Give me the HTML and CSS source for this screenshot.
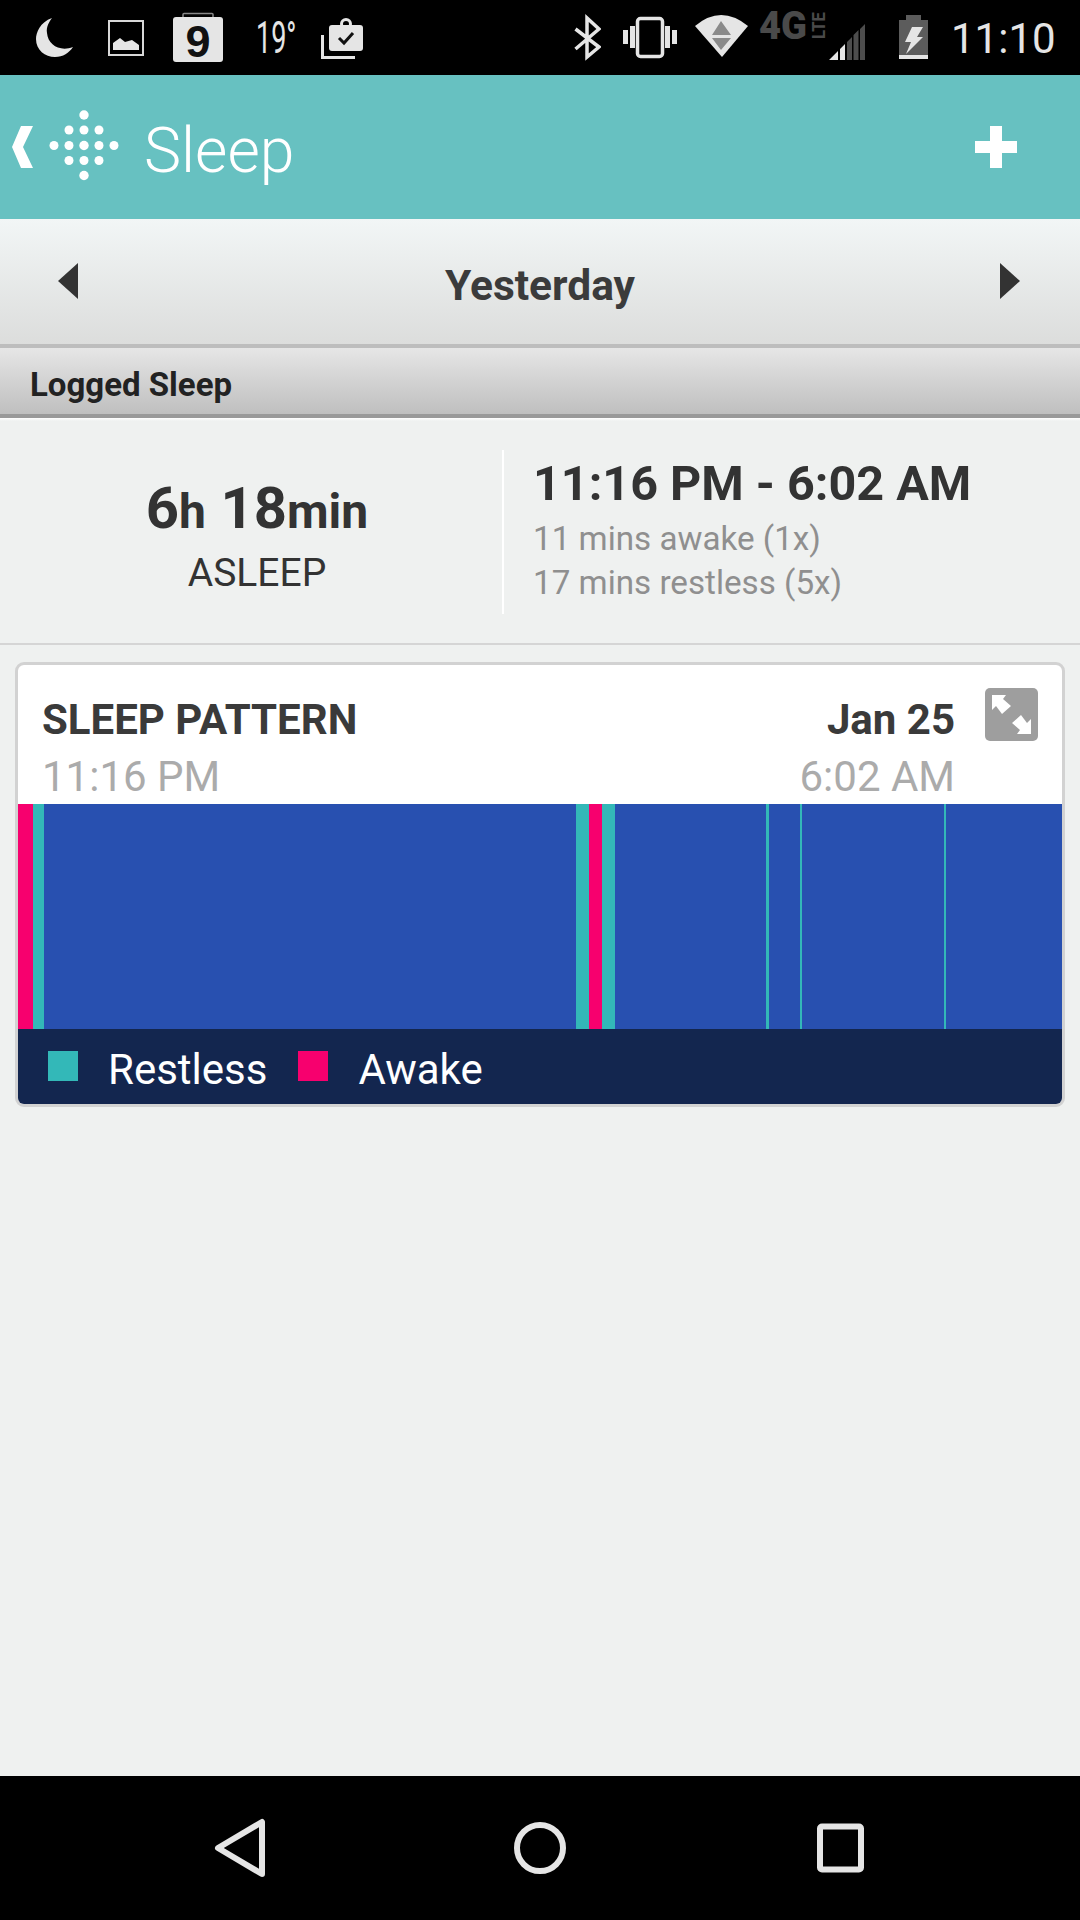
FILE: index.html
```html
<!DOCTYPE html>
<html lang="en">
<head>
    <meta charset="UTF-8">
    <title>Sleep</title>
    <link rel="stylesheet" href="styles.css">
</head>
<body>
    <!-- status bar: every icon is 75 tall so its y values are the y of the screen -->
    <div class="status">
        <svg class="moon" width="37" height="75" viewBox="36 0 37 75"><path d="M52 18C40 22 36 33 36 39C36 50 45 57 55 57C63 57 69 53 73 47C60 52 48 45 47 33C46 27 49 22 52 18Z" fill="#e5e5e5"/></svg>
        <svg class="picture" width="36" height="75" viewBox="108 0 36 75"><rect x="109" y="21" width="34" height="34" fill="none" stroke="#d8d8d8" stroke-width="2"/><path d="M113 50V43L120 38L125 42L132 40L139 45V50Z" fill="#e5e5e5"/></svg>
        <svg class="calendar" width="50" height="75" viewBox="173 0 50 75"><rect x="183" y="13.500" width="30" height="6" rx="1" fill="none" stroke="#888" stroke-width="1.500"/><rect x="173" y="17" width="50" height="45" rx="3" fill="#e5e5e5"/><text x="198" y="57" class="calendar-day">9</text></svg>
        <span class="temp">19°</span>
        <svg class="case" width="42" height="75" viewBox="321 0 42 75"><path d="M322.500 35V57.500H355" fill="none" stroke="#e5e5e5" stroke-width="3"/><circle cx="346" cy="24" r="4.500" fill="none" stroke="#e5e5e5" stroke-width="3"/><rect x="329" y="25" width="34" height="26" rx="3" fill="#e5e5e5"/><path d="M339 38L344 43L353 33" fill="none" stroke="#111" stroke-width="3"/></svg>

        <svg class="bluetooth" width="27" height="75" viewBox="574 0 27 75"><path d="M575.500 29L599 47L587 57V18L599 29L575.500 49" fill="none" stroke="#e5e5e5" stroke-width="3.500"/></svg>
        <svg class="vibrate" width="54" height="75" viewBox="623 0 54 75"><rect x="637.500" y="18.500" width="25" height="38" rx="3" fill="none" stroke="#e5e5e5" stroke-width="3.500"/><path d="M623 30h5v14h-5zM630 26h5v22h-5zM665 26h5v22h-5zM672 30h5v14h-5z" fill="#e5e5e5"/></svg>
        <svg class="wifi" width="53" height="75" viewBox="695 0 53 75"><path d="M695 26Q721 4 748 26L722 57Z" fill="#e5e5e5"/><path d="M721 21L731 35H712ZM712 38H731L721 50Z" fill="#8a8a8a"/></svg>
        <svg class="network" width="66" height="75" viewBox="759 0 66 75"><text x="759" y="39" class="net-big" textLength="48" lengthAdjust="spacingAndGlyphs">4G</text><text transform="translate(825 39) rotate(-90)" class="net-small" textLength="27" lengthAdjust="spacingAndGlyphs">LTE</text></svg>
        <svg class="signal" width="36" height="75" viewBox="829 0 36 75"><path d="M829 60L838 51V60ZM840 49L845 44V60H840Z" fill="#e5e5e5"/><path d="M847 42L852 37V60H847ZM853.500 35L858.500 30V60H853.500ZM860 29L865 24V60H860Z" fill="#4d4d4d"/></svg>
        <svg class="battery" width="29" height="75" viewBox="899 0 29 75"><path d="M906 15H921V20H928V59H899V20H906Z" fill="#5c5c5c"/><rect x="899" y="55" width="29" height="4" fill="#e5e5e5"/><path d="M912 27H923L917 37H923L906 54L911 42H905Z" fill="#e5e5e5"/></svg>
        <span class="clock">11:10</span>
    </div>

    <header class="appbar">
        <svg class="back" width="21" height="42" viewBox="12 126 21 42"><path d="M21 126H33L23 147L33 168H21L12 147Z" fill="#fff"/></svg>
        <svg class="logo" width="70" height="74" viewBox="49 110 70 74" fill="#fff">
            <circle cx="84" cy="115" r="4.700"/>
            <circle cx="69" cy="130" r="4.500"/><circle cx="84" cy="130" r="4.500"/><circle cx="99" cy="130" r="4.500"/>
            <circle cx="54" cy="145.500" r="4.500"/><circle cx="69" cy="145.500" r="4.500"/><circle cx="84" cy="145.500" r="4.700"/><circle cx="99" cy="145.500" r="4.500"/><circle cx="114" cy="145.500" r="4.500"/>
            <circle cx="69" cy="160.500" r="4.500"/><circle cx="84" cy="160.500" r="4.500"/><circle cx="99" cy="160.500" r="4.500"/>
            <circle cx="84" cy="175.500" r="4.700"/>
        </svg>
        <h1 class="appbar-title">Sleep</h1>
        <svg class="plus" width="42" height="42" viewBox="0 0 42 42"><path d="M15 0H27V15H42V27H27V42H15V27H0V15H15Z" fill="#fff"/></svg>
    </header>

    <div class="daybar">
        <svg class="day-arrow" width="20" height="36" viewBox="0 0 20 36"><path d="M20 0V36L0 18Z" fill="#333"/></svg>
        <span class="daybar-label">Yesterday</span>
        <svg class="day-arrow" width="20" height="36" viewBox="0 0 20 36"><path d="M0 0V36L20 18Z" fill="#333"/></svg>
    </div>

    <div class="section-title">Logged Sleep</div>

    <main class="content">
        <section class="summary">
            <div class="summary-total">
                <div class="total-value">6<small>h</small> 18<small>min</small></div>
                <div class="total-label">ASLEEP</div>
            </div>
            <div class="summary-times">
                <div class="times-range">11:16 PM - 6:02 AM</div>
                <div class="times-note">11 mins awake (1x)</div>
                <div class="times-note">17 mins restless (5x)</div>
            </div>
        </section>

        <section class="card">
            <div class="card-head">
                <div class="card-col">
                    <div class="card-strong">SLEEP PATTERN</div>
                    <div class="card-time">11:16 PM</div>
                </div>
                <div class="card-col card-right">
                    <div class="card-strong">Jan 25</div>
                    <div class="card-time">6:02 AM</div>
                </div>
                <svg class="expand" width="53" height="53" viewBox="0 0 53 53">
                    <rect width="53" height="53" rx="5" fill="#9e9e9e"/>
                    <path d="M7 7H21L18 11L26 18L17 26L11 18L7 22ZM46 46H32L35 42L27 35L36 27L42 35L46 31Z" fill="#fff"/>
                </svg>
            </div>
            <div class="chart">
                <span class="seg awake" style="width:15px"></span>
                <span class="seg restless" style="width:11px"></span>
                <span class="seg" style="width:532px"></span>
                <span class="seg restless" style="width:13px"></span>
                <span class="seg awake" style="width:13px"></span>
                <span class="seg restless" style="width:13px"></span>
                <span class="seg" style="width:151px"></span>
                <span class="seg restless" style="width:3px"></span>
                <span class="seg" style="width:31px"></span>
                <span class="seg restless" style="width:2px"></span>
                <span class="seg" style="width:142px"></span>
                <span class="seg restless" style="width:2px"></span>
            </div>
            <div class="legend">
                <span class="swatch restless"></span>
                <span class="legend-text">Restless</span>
                <span class="swatch awake"></span>
                <span class="legend-text">Awake</span>
            </div>
        </section>
    </main>

    <nav class="navbar">
        <svg width="52" height="60" viewBox="0 0 52 60"><path d="M48 4V56L4 30Z" fill="none" stroke="#e5e5e5" stroke-width="6" stroke-linejoin="round"/></svg>
        <svg width="52" height="60" viewBox="0 0 52 60"><circle cx="26" cy="30" r="23" fill="none" stroke="#e5e5e5" stroke-width="6"/></svg>
        <svg width="52" height="60" viewBox="0 0 52 60"><rect x="6" y="8.500" width="41" height="43" rx="2" fill="none" stroke="#e5e5e5" stroke-width="6"/></svg>
    </nav>
</body>
</html>
```

FILE: styles.css
```css
* {
    box-sizing: border-box;
}

body {
    margin: 0;
    width: 1080px;
    height: 1920px;
    display: flex;
    flex-direction: column;
    overflow: hidden;
    background: #eff1f0;
    font-family: Roboto, "Liberation Sans", sans-serif;
}

svg {
    display: block;
    flex-shrink: 0;
}

/* status bar */
.status {
    height: 75px;
    flex-shrink: 0;
    display: flex;
    padding: 0 25px 0 36px;
    background: #000;
    color: #e5e5e5;
}

.picture { margin-left: 35px; }
.calendar { margin-left: 29px; }
.case { margin-left: 28px; }
.bluetooth { margin-left: auto; }
.vibrate { margin-left: 22px; }
.wifi { margin-left: 18px; }
.network { margin-left: 11px; overflow: visible; }
.signal { margin-left: 4px; }
.battery { margin-left: 34px; }

.calendar-day {
    font-family: "Liberation Sans", sans-serif;
    font-size: 45px;
    font-weight: 700;
    text-anchor: middle;
    fill: #111;
}

.net-big {
    font-size: 38px;
    font-weight: 900;
    fill: #4a4a4a;
}

.net-small {
    font-size: 19px;
    font-weight: 700;
    fill: #4a4a4a;
}

.temp {
    width: 37px;
    margin-left: 33px;
    font-size: 45px;
    line-height: 76px;
    white-space: nowrap;
    transform: scaleX(.6);
    transform-origin: left center;
}

.clock {
    width: 104px;
    margin-left: 23px;
    font-size: 42px;
    line-height: 78px;
    white-space: nowrap;
}

/* app bar */
.appbar {
    height: 144px;
    flex-shrink: 0;
    display: flex;
    align-items: center;
    padding: 0 63px 0 12px;
    background: #67c1c1;
    color: #fff;
}

.logo { margin-left: 16px; }

.appbar-title {
    margin: 7px 0 0 25px;
    font-size: 62.500px;
    font-weight: 300;
    line-height: 70px;
}

.plus { margin-left: auto; }

/* day picker */
.daybar {
    height: 129px;
    flex-shrink: 0;
    display: flex;
    align-items: center;
    justify-content: space-between;
    padding: 0 60px 0 58px;
    background: linear-gradient(#f2f6f6, #dcdddc);
    border-bottom: 4px solid #bdbdbd;
}

.day-arrow { margin-bottom: 2px; }

.daybar-label {
    margin-left: 2px;
    padding-top: 8px;
    font-size: 42.500px;
    font-weight: 700;
    color: #3b3b3b;
}

.section-title {
    height: 70px;
    flex-shrink: 0;
    padding: 8px 0 0 30px;
    font-size: 33px;
    font-weight: 700;
    line-height: 58px;
    color: #222;
    background: linear-gradient(#e6e6e6, #bfbfbf);
    border-bottom: 4px solid #999;
}

/* summary */
.content {
    flex: 1;
    background: linear-gradient(#fff, #eff1f0 3px);
}

.summary {
    height: 227px;
    display: flex;
    align-items: flex-start;
    border-bottom: 2px solid #d5d5d5;
}

.summary-total {
    width: 502px;
    margin-top: 56px;
    padding-left: 12px;
    text-align: center;
    color: #333;
}

.total-value {
    font-size: 58px;
    font-weight: 700;
    line-height: 68px;
}

.total-value small {
    font-size: 48px;
}

.total-label {
    margin-top: 2px;
    font-size: 39px;
    font-weight: 400;
    line-height: 50px;
}

.summary-times {
    height: 164px;
    margin-top: 32px;
    padding: 6px 0 0 29px;
    border-left: 2px solid #fff;
}

.times-range {
    margin-bottom: 5px;
    font-size: 48.500px;
    font-weight: 700;
    line-height: 56px;
    color: #333;
}

.times-note {
    font-size: 33.200px;
    line-height: 44px;
    color: #8f8f8f;
}

/* sleep pattern card */
.card {
    margin: 17px 15px 0;
    border: 3px solid #d2d2d2;
    border-radius: 9px;
    overflow: hidden;
    background: #fff;
}

.card-head {
    height: 139px;
    display: flex;
    padding: 26px 24px 0 24px;
}

.card-right {
    margin-left: auto;
    text-align: right;
}

.card-strong {
    font-size: 42px;
    font-weight: 700;
    line-height: 57px;
    color: #3a3a3a;
}

.card-time {
    font-size: 42px;
    font-weight: 400;
    line-height: 58px;
    color: #ababab;
}

.expand {
    margin: -3px 0 0 30px;
}

.chart {
    height: 225px;
    display: flex;
    background: #2850b0;
}

.seg {
    display: block;
    flex-shrink: 0;
}

.restless { background: #33b8b8; }
.awake { background: #f7006e; }

.legend {
    height: 75px;
    display: flex;
    align-items: center;
    padding-left: 30px;
    background: #13264f;
    color: #fff;
}

.swatch {
    width: 30px;
    height: 30px;
    margin: -1px 30px 0 0;
}

.legend-text {
    margin-right: 31px;
    padding-top: 6px;
    font-size: 42px;
    font-weight: 400;
}

/* android buttons */
.navbar {
    height: 144px;
    flex-shrink: 0;
    display: flex;
    align-items: center;
    justify-content: space-between;
    padding: 0 214px;
    background: #000;
}
```
